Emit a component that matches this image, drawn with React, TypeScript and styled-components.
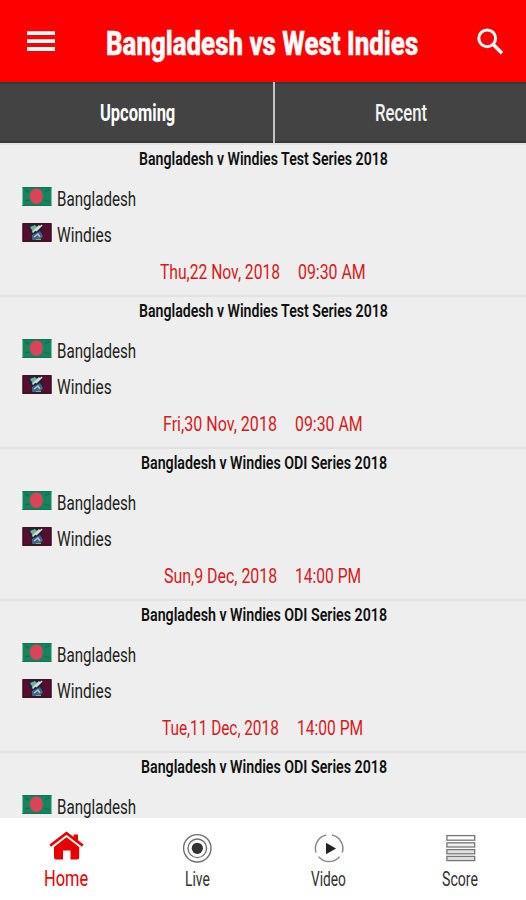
import React, { useLayoutEffect, useRef, useState } from 'react';
import styled, { createGlobalStyle } from 'styled-components';

const GlobalStyle = createGlobalStyle`
  * { box-sizing: border-box; }
  html, body { margin: 0; padding: 0; }
  body { font-family: Roboto, "Liberation Sans", sans-serif; background: #fff; }
`;

const Screen = styled.div`
  width: 526px;
  height: 900px;
  overflow: hidden;
  display: flex;
  flex-direction: column;
  background: #eee;
`;

const FitBox = styled.span<{ $width: number }>`
  display: block;
  flex: none;
  width: ${(p) => p.$width}px;
  white-space: pre;
`;

const FitInner = styled.span`
  display: inline-block;
  transform-origin: 0 50%;
`;

/* Condenses its text horizontally so that it fills the given width. */
function Condensed({ width, children }: { width: number; children: string }) {
  const ref = useRef<HTMLSpanElement>(null);
  const [scale, setScale] = useState(1);
  useLayoutEffect(() => {
    if (ref.current) setScale(width / ref.current.offsetWidth);
  }, [width, children]);
  return (
    <FitBox $width={width}>
      <FitInner ref={ref} style={{ transform: `scaleX(${scale})` }}>{children}</FitInner>
    </FitBox>
  );
}

const Header = styled.header`
  flex: none;
  height: 82px;
  background: #fe0000;
  display: flex;
  align-items: center;
  justify-content: space-between;
  padding: 6px 21px 0 26px;
`;

const HeaderIcon = styled.svg`
  display: block;
  flex: none;
  fill: none;
  stroke: #fff;
  margin-top: -6px;
`;

const Title = styled.h1`
  margin: 0 0 0 -8px;
  font-size: 32.5px;
  line-height: 40px;
  font-weight: 800;
  color: #fff;
  -webkit-text-stroke: 0.5px #fff;
`;

const Tabs = styled.nav`
  flex: none;
  height: 61px;
  display: grid;
  grid-template-columns: 273px 2px 251px;
  background: #434343;
  border-top: 2px solid #303b3c;
  border-bottom: 2px solid #383838;
`;

const Tab = styled.div<{ $active?: boolean }>`
  display: flex;
  align-items: center;
  justify-content: center;
  padding-left: ${(p) => (p.$active ? 2 : 0)}px;
  font-size: 23.5px;
  line-height: 30px;
  color: ${(p) => (p.$active ? '#fff' : '#f4f4f4')};
  font-weight: ${(p) => (p.$active ? 700 : 500)};
`;

const TabDivider = styled.div`
  background: #c4c4c4;
  margin: -2px 0;
`;

const List = styled.main`
  flex: 1;
  min-height: 0;
  overflow: hidden;
  border-top: 2px solid #e2e2e2;
`;

const Match = styled.article`
  height: 152px;
  border-bottom: 2px solid #e1e1e1;
`;

const Series = styled.h2`
  margin: 0 0 8px;
  display: flex;
  justify-content: center;
  padding-left: 1px;
  font-size: 19px;
  line-height: 28px;
  font-weight: 600;
  color: #101010;
`;

const Team = styled.div`
  height: 36.25px;
  display: flex;
  align-items: center;
  gap: 5px;
  padding-left: 22px;
  font-size: 20.5px;
  line-height: 36px;
  color: #222;
`;

const Flag = styled.svg`
  display: block;
  flex: none;
  width: 30px;
  height: 19px;
  margin-top: -5px;
`;

const When = styled.div`
  display: flex;
  justify-content: center;
  gap: 18px;
  font-size: 21px;
  line-height: 36px;
  padding-right: 1px;
  color: #d71920;
`;

const BottomNav = styled.nav`
  flex: none;
  height: 82px;
  background: #fff;
  display: grid;
  grid-template-columns: repeat(4, 1fr);
`;

const NavItem = styled.div<{ $active?: boolean }>`
  display: flex;
  flex-direction: column;
  align-items: center;
  padding-top: 12px;
  color: ${(p) => (p.$active ? '#e60000' : '#303030')};
  font-size: ${(p) => (p.$active ? 22 : 20)}px;
  line-height: ${(p) => (p.$active ? 27 : 28)}px;
`;

const NavIcon = styled.svg`
  display: block;
  width: 36px;
  height: 36px;
  margin-bottom: -1px;
`;

const BangladeshFlag = () => (
  <Flag viewBox="0 0 30 19">
    <rect x=".5" y=".2" width="29" height="18.6" fill="#16855f" />
    <path d="M.5.7H29.5M.5 18.3H29.5" stroke="#0b6950" />
    <path d="M3 3l4 2M23 4l5-1M22 13l6 2M3 14l5-1" stroke="#096f48" strokeWidth="1.2" />
    <ellipse cx="14.3" cy="9.3" rx="6.6" ry="7.8" fill="#dc4258" />
  </Flag>
);

const WindiesFlag = () => (
  <Flag viewBox="0 0 30 19">
    <rect x=".5" y=".2" width="29" height="18.6" fill="#560f30" />
    <path d="M.5.7H29.5M.5 18.3H29.5M29 1v17M1 1v17" stroke="#300b1d" />
    <path d="M7 1h13l1 8-1 9H8l2-7-4-5z" fill="#251d32" />
    <path d="M8 4l5-2 2 2-4 5z" fill="#68b8a0" />
    <path d="M14 8l6-6M10.5 9.5l7-7" stroke="#d7e2db" strokeWidth="1.6" />
    <path d="M10 12l8-4 3 5-3 4h-8z" fill="#3f658b" />
    <path d="M12 14l4-3 2 3" fill="none" stroke="#b5c6c6" strokeWidth="1.4" />
    <path d="M14 16.5h5" stroke="#b4a148" />
  </Flag>
);

const HomeIcon = () => (
  <NavIcon viewBox="0 0 36 36">
    <path d="M25.5 4.5h4.5V13.5L25.5 9.5z" fill="#e60000" />
    <path d="M2.2 15.6L18.5 3.2 34.8 15.6" fill="none" stroke="#e60000" strokeWidth="2.6" />
    <path d="M18.5 7.2L31.2 17V27.4q0 2-2 2H22.5v-9h-7.5V29.4H8q-2 0-2-2V17z" fill="#e60000" />
  </NavIcon>
);

const LiveIcon = () => (
  <NavIcon viewBox="0 0 36 36" fill="none" stroke="#707070" strokeWidth="1.4">
    <circle cx="18.3" cy="18.3" r="13.7" />
    <circle cx="18.3" cy="18.3" r="9.3" />
    <circle cx="18.3" cy="18.3" r="5.6" fill="#333" stroke="none" />
  </NavIcon>
);

const VideoIcon = () => (
  <NavIcon viewBox="0 0 36 36" fill="none" stroke="#888" strokeWidth="1.5">
    <path d="M5.1 22.6A13.5 13.5 0 0 1 15.4 5.1M20.9 5.1A13.5 13.5 0 0 1 31.2 22.6M28.6 26.6A13.5 13.5 0 0 1 7.6 26.6" />
    <path d="M15 12.8v11.4L25 18.5z" fill="#222" stroke="none" />
  </NavIcon>
);

const ScoreIcon = () => (
  <NavIcon viewBox="0 0 36 36" fill="#e0e0e0" stroke="#777" strokeWidth="1.3">
    <rect x="4.9" y="5.6" width="27.8" height="4.6" fill="#fff" />
    <rect x="4.9" y="12.8" width="27.8" height="4.2" fill="#eee" />
    <rect x="4.9" y="19.6" width="27.8" height="4.2" />
    <rect x="4.9" y="26.4" width="27.8" height="4.2" />
  </NavIcon>
);

const teams = {
  Bangladesh: { width: 79, FlagIcon: BangladeshFlag },
  Windies: { width: 55, FlagIcon: WindiesFlag },
};

type TeamName = keyof typeof teams;

interface MatchData {
  series: string;
  seriesWidth: number;
  sides: TeamName[];
  when?: [string, number][];
}

const both: TeamName[] = ['Bangladesh', 'Windies'];
const test = { series: 'Bangladesh v Windies Test Series 2018', seriesWidth: 249, sides: both };
const odi = { series: 'Bangladesh v Windies ODI Series 2018', seriesWidth: 246, sides: both };

const matches: MatchData[] = [
  { ...test, when: [['Thu,22 Nov, 2018', 120], ['09:30 AM', 68]] },
  { ...test, when: [['Fri,30 Nov, 2018', 114], ['09:30 AM', 68]] },
  { ...odi, when: [['Sun,9 Dec, 2018', 113], ['14:00 PM', 66]] },
  { ...odi, when: [['Tue,11 Dec, 2018', 117], ['14:00 PM', 66]] },
  { ...odi, sides: ['Bangladesh'] },
];

const navItems = [
  { label: 'Home', width: 44, Icon: HomeIcon, active: true },
  { label: 'Live', width: 25, Icon: LiveIcon },
  { label: 'Video', width: 35, Icon: VideoIcon },
  { label: 'Score', width: 36, Icon: ScoreIcon },
];

export default function App() {
  return (
    <>
      <GlobalStyle />
      <Screen>
        <Header>
          <HeaderIcon width="30" height="24" viewBox="0 0 30 24" strokeWidth="3.8">
            <path d="M1 4.2h28M1 12.2h28M1 20h28" />
          </HeaderIcon>
          <Title><Condensed width={312}>Bangladesh vs West Indies</Condensed></Title>
          <HeaderIcon width="30" height="30" viewBox="0 0 30 30" strokeWidth="3">
            <circle cx="12.2" cy="12.3" r="8.4" />
            <path d="M18 18.2l9 9" strokeWidth="3.6" />
          </HeaderIcon>
        </Header>
        <Tabs>
          <Tab $active><Condensed width={75}>Upcoming</Condensed></Tab>
          <TabDivider />
          <Tab><Condensed width={52}>Recent</Condensed></Tab>
        </Tabs>
        <List>
          {matches.map((m, i) => (
            <Match key={i}>
              <Series><Condensed width={m.seriesWidth}>{m.series}</Condensed></Series>
              {m.sides.map((name) => {
                const { width, FlagIcon } = teams[name];
                return (
                  <Team key={name}>
                    <FlagIcon />
                    <Condensed width={width}>{name}</Condensed>
                  </Team>
                );
              })}
              {m.when && (
                <When>
                  {m.when.map(([text, width]) => (
                    <Condensed key={text} width={width}>{text}</Condensed>
                  ))}
                </When>
              )}
            </Match>
          ))}
        </List>
        <BottomNav>
          {navItems.map(({ label, width, Icon, active }) => (
            <NavItem key={label} $active={active}>
              <Icon />
              <Condensed width={width}>{label}</Condensed>
            </NavItem>
          ))}
        </BottomNav>
      </Screen>
    </>
  );
}
